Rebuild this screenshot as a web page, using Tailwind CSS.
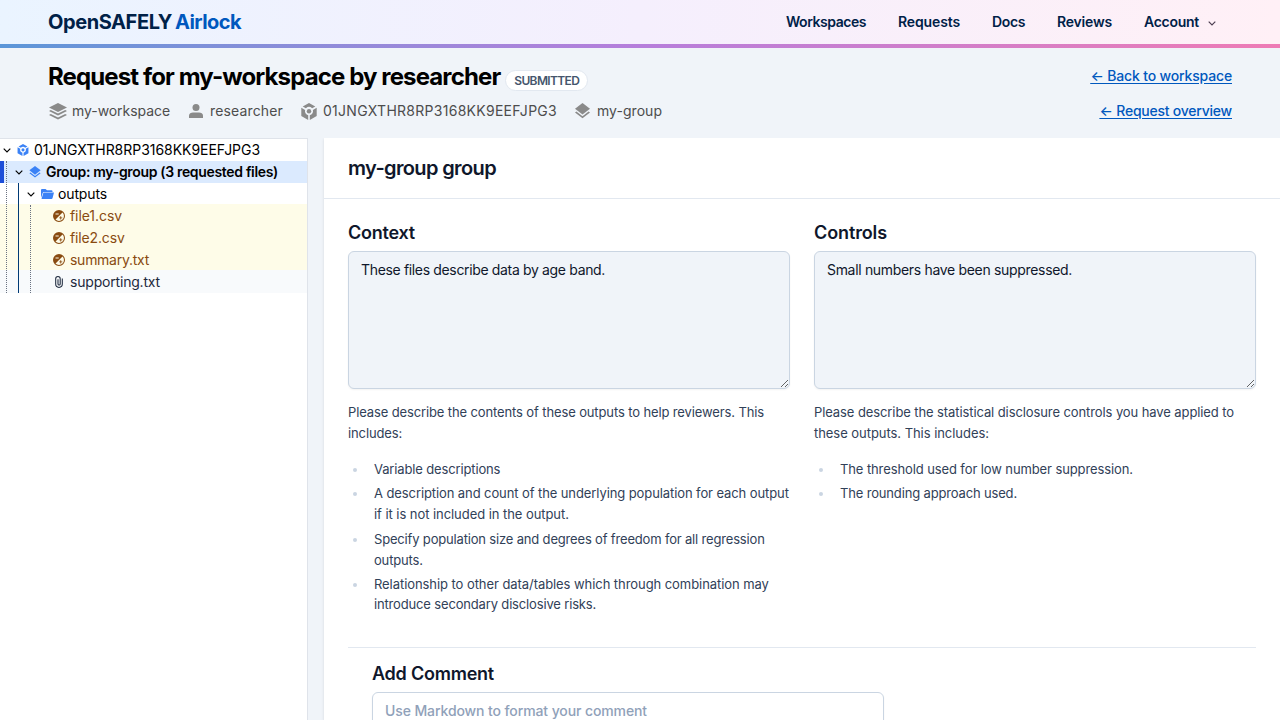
<!DOCTYPE html>
<html lang="en">
<head>
<meta charset="utf-8">
<title>Request for my-workspace by researcher</title>
<script src="https://cdn.jsdelivr.net/npm/@tailwindcss/browser@4"></script>
</head>
<body class="h-screen overflow-hidden bg-[#f0f4f9] font-['Inter',sans-serif] text-sm text-slate-900">
<svg class="hidden">
  <symbol id="stack" viewBox="0 0 18 17"><path d="M9 0 18 4.5 9 9 0 4.5Z"/><path d="M0 7.900 1.800 7 9 10.600 16.200 7 18 7.900 9 12.400ZM0 11.900 1.800 11 9 14.600 16.200 11 18 11.900 9 16.400Z"/></symbol>
  <symbol id="group" viewBox="0 0 15 16"><path d="M7.500 0 15 5.800 7.500 11.600 0 5.800Z"/><path d="m0 9.500 1.400-1 6.100 4.700 6.100-4.700 1.400 1-7.500 5.800Z"/></symbol>
  <symbol id="cube" viewBox="0 0 16 17"><path d="m8 0 6.300 3.400-3.200 1.900a4.500 4.500 0 0 0-6.200 0L1.700 3.400ZM.300 4.700l3.800 2.200a4.400 4.400 0 0 0 3.100 5.400V17L.300 13ZM15.700 4.700l-3.800 2.200a4.400 4.400 0 0 1-3.100 5.400V17l6.900-4Z"/><circle cx="8" cy="8.300" r="2.200"/></symbol>
  <symbol id="down" viewBox="0 0 8 5"><path d="m.700.700 3.300 3.300L7.300.700" fill="none" stroke="currentColor" stroke-width="1.150"/></symbol>
  <symbol id="review" viewBox="0 0 12 12"><path fill-rule="evenodd" d="M6 0a6 6 0 1 0 0 12A6 6 0 0 0 6 0ZM9.500 2.500A4.900 4.900 0 0 1 2.500 9.500ZM2.500 3.500h3.200v1h-3.200Z"/><path d="M7.300 6.300h.9v1.100h1.100v.9H8.200v1.100h-.9V8.300H6.200v-.9h1.100Z"/></symbol>
</svg>

<header class="h-12 bg-gradient-to-r from-[#5a96d8] via-[#b67edb] to-[#ee7bb5]">
  <div class="flex h-11 items-center justify-between bg-gradient-to-r from-[#eaf4ff] via-[#f5effd] to-[#fff0f6] px-12">
    <div class="flex gap-[3px] text-xl font-bold text-[#002147]"><span class="tracking-[-0.42px]">OpenSAFELY</span><span class="tracking-[-0.56px] text-[#0058be]">Airlock</span></div>
    <nav class="flex gap-8 font-semibold text-[#002147]">
      <a class="w-20 tracking-[-0.46px]">Workspaces</a><a class="w-[62px] tracking-[-0.13px]">Requests</a><a class="w-[33px] tracking-[-0.37px]">Docs</a><a class="w-[55px] tracking-[-0.2px]">Reviews</a>
      <a class="flex w-[88px] items-center gap-[9px] tracking-[-0.27px]">Account<svg class="mt-0.5 h-[5px] w-2 text-[#4b3c4f]"><use href="#down"/></svg></a>
    </nav>
  </div>
</header>

<section class="flex h-[90px] justify-between px-12 pt-3">
  <div>
    <div class="flex h-[34px] items-center gap-[5px]">
      <h1 class="text-2xl font-bold tracking-[-0.88px] text-black">Request for my-workspace by researcher</h1>
      <span class="mt-[7px] flex h-[21px] w-[83px] items-center justify-center rounded-full border border-slate-200 bg-white text-xs font-semibold tracking-[-0.63px] text-slate-600">SUBMITTED</span>
    </div>
    <div class="mt-[7px] flex h-5 items-center text-[#4d4d4d]">
      <span class="flex w-[140px] items-center gap-[5px] pl-px tracking-[-0.06px]"><svg class="h-[17px] w-[18px] fill-[#8a8a8a]"><use href="#stack"/></svg>my-workspace</span>
      <span class="flex w-[113px] items-center gap-[7px] pl-px tracking-[0.15px]"><svg class="h-[14px] w-[14px] fill-[#8a8a8a]" viewBox="0 0 14 14"><circle cx="7" cy="3.500" r="3.500"/><path d="M0 14v-2.500C0 9.500 2 8.500 4 8.500h6c2 0 4 1 4 3V14Z"/></svg>researcher</span>
      <span class="flex w-[274px] items-center gap-1.5 tracking-[0.275px]"><svg class="h-[17px] w-4 fill-[#8a8a8a]"><use href="#cube"/></svg>01JNGXTHR8RP3168KK9EEFJPG3</span>
      <span class="flex items-center gap-[7px] tracking-[0.04px]"><svg class="h-4 w-[15px] fill-[#8a8a8a]"><use href="#group"/></svg>my-group</span>
    </div>
  </div>
  <div class="flex flex-col items-end gap-[15px] pt-1.5 font-[550] text-[#0058be] underline underline-offset-2">
    <a class="tracking-[-0.16px]">← Back to workspace</a><a class="tracking-[-0.23px]">← Request overview</a>
  </div>
</section>

<div class="flex h-[582px] gap-4 overflow-hidden">
  <aside class="w-[308px] shrink-0 border-t border-r border-[#dfe3ea] bg-white leading-[22px] text-black">
    <div class="flex h-[22px] items-center pl-[3px]"><svg class="h-[5px] w-2"><use href="#down"/></svg><svg class="ml-1.5 h-3 w-3 fill-[#3b82f6]"><use href="#cube"/></svg><span class="ml-[5px] tracking-[-0.03px]">01JNGXTHR8RP3168KK9EEFJPG3</span></div>
    <div class="relative">
      <div class="flex h-[22px] items-center border-l-4 border-[#1d4ed8] bg-[#dbeafe] pl-[11px] font-semibold"><svg class="h-[5px] w-2"><use href="#down"/></svg><svg class="ml-1.5 h-3 w-3 fill-[#3b82f6]"><use href="#group"/></svg><span class="ml-[5px] tracking-[-0.325px]">Group: my-group (3 requested files)</span></div>
      <div class="relative">
        <div class="flex h-[22px] items-center pl-[27px]"><svg class="h-[5px] w-2"><use href="#down"/></svg><svg class="ml-1.5 h-[10px] w-[13px] fill-[#3b82f6]" viewBox="0 0 13 10"><path d="M0 9V1q0-1 1-1h3.500L6 1.300h4.500q1 0 1 1V3H3Q2 3 1.700 4Z"/><path d="M3 3.600h10l-1.500 5.600q-.200.800-1 .8H.500L2.200 4.300Q2.400 3.600 3 3.600Z"/></svg><span class="ml-1 tracking-[-0.13px]">outputs</span></div>
        <div class="relative -mt-px">
          <div class="h-[66px] bg-[#fefce8] pt-px text-[#894b10]">
            <div class="flex h-[22px] items-center gap-[5px] pl-[53px] tracking-[-0.07px]"><svg class="h-3 w-3 fill-current"><use href="#review"/></svg>file1.csv</div>
            <div class="flex h-[22px] items-center gap-[5px] pl-[53px] tracking-[-0.15px]"><svg class="h-3 w-3 fill-current"><use href="#review"/></svg>file2.csv</div>
            <div class="flex h-[22px] items-center gap-[5px] pl-[53px] tracking-[-0.27px]"><svg class="h-3 w-3 fill-current"><use href="#review"/></svg>summary.txt</div>
          </div>
          <div class="flex h-[23px] items-center gap-[5px] bg-slate-50 pt-px pl-[53px] tracking-[-0.19px] text-slate-800"><svg class="h-3 w-3" viewBox="0 0 12 12" fill="none" stroke="currentColor" stroke-width="1.050"><path d="M9.300 2.600v5.500a3.300 3.300 0 0 1-6.600 0V2.800a2.200 2.200 0 0 1 4.500 0v5.100a1.100 1.100 0 0 1-2.200 0V3.200"/></svg>supporting.txt</div>
          <div class="absolute top-px bottom-0 left-[30px] border-l border-dotted border-gray-500"></div>
        </div>
        <div class="absolute inset-y-0 left-[18px] w-px bg-[#003a75]"></div>
      </div>
      <div class="absolute inset-y-0 left-[6px] border-l border-dotted border-gray-500"></div>
    </div>
  </aside>

  <main class="min-w-0 flex-1 bg-white shadow">
    <div class="flex h-[61px] items-center border-b border-slate-200 px-6"><h2 class="text-xl font-semibold tracking-[-0.63px]">my-group group</h2></div>
    <div class="h-[521px] overflow-hidden px-6 pt-5">
      <div class="grid h-[428px] grid-cols-2 gap-6">
        <div>
          <h3 class="text-lg font-semibold tracking-[-0.225px]">Context</h3>
          <textarea class="mt-1 block h-[138px] w-full rounded-md border border-slate-300 bg-[#f0f4f9] px-3 py-2 leading-5 tracking-[-0.344px] shadow-xs">These files describe data by age band.</textarea>
          <div class="mt-[13px] text-[13px] leading-[20.8px] text-slate-700">
            <p class="tracking-[-0.123px]">Please describe the contents of these outputs to help reviewers. This<br>includes:</p>
            <ul class="mt-[15px] flex flex-col gap-1 tracking-[-0.095px] whitespace-nowrap">
              <li class="flex gap-[17px] pl-[5px]"><i class="mt-[9px] h-1 w-1 rounded-full bg-slate-300"></i><span class="tracking-[-0.14px]">Variable descriptions</span></li>
              <li class="flex gap-[17px] pl-[5px]"><i class="mt-[9px] h-1 w-1 rounded-full bg-slate-300"></i><span>A description and count of the underlying population for each output<br><span class="tracking-[-0.06px]">if it is not included in the output.</span></span></li>
              <li class="flex gap-[17px] pl-[5px]"><i class="mt-[9px] h-1 w-1 rounded-full bg-slate-300"></i><span class="tracking-[-0.173px]">Specify population size and degrees of freedom for all regression<br>outputs.</span></li>
              <li class="-mt-px flex gap-[17px] pl-[5px]"><i class="mt-[9px] h-1 w-1 rounded-full bg-slate-300"></i><span><span class="tracking-[-0.065px]">Relationship to other data/tables which through combination may</span><br><span class="tracking-[-0.16px]">introduce secondary disclosive risks.</span></span></li>
            </ul>
          </div>
        </div>
        <div>
          <h3 class="text-lg font-semibold tracking-[-0.113px]">Controls</h3>
          <textarea class="mt-1 block h-[138px] w-full rounded-md border border-slate-300 bg-[#f0f4f9] px-3 py-2 leading-5 tracking-[-0.322px] shadow-xs">Small numbers have been suppressed.</textarea>
          <div class="mt-[13px] text-[13px] leading-[20.8px] text-slate-700">
            <p class="tracking-[-0.096px]">Please describe the statistical disclosure controls you have applied to<br><span class="tracking-[-0.05px]">these outputs. This includes:</span></p>
            <ul class="mt-[15px] flex flex-col gap-1 tracking-[-0.105px] whitespace-nowrap">
              <li class="flex gap-[17px] pl-[5px]"><i class="mt-[9px] h-1 w-1 rounded-full bg-slate-300"></i><span>The threshold used for low number suppression.</span></li>
              <li class="flex gap-[17px] pl-[5px]"><i class="mt-[9px] h-1 w-1 rounded-full bg-slate-300"></i><span class="tracking-[-0.16px]">The rounding approach used.</span></li>
            </ul>
          </div>
        </div>
      </div>
      <div class="border-t border-slate-200 px-6 pt-3">
        <h3 class="text-lg font-semibold tracking-[-0.226px]">Add Comment</h3>
        <textarea class="mt-1 block h-[138px] w-[512px] rounded-md border border-slate-300 px-3 py-2 leading-5 font-medium tracking-[-0.105px] shadow-xs placeholder:text-slate-400" placeholder="Use Markdown to format your comment"></textarea>
      </div>
    </div>
  </main>
</div>
</body>
</html>
